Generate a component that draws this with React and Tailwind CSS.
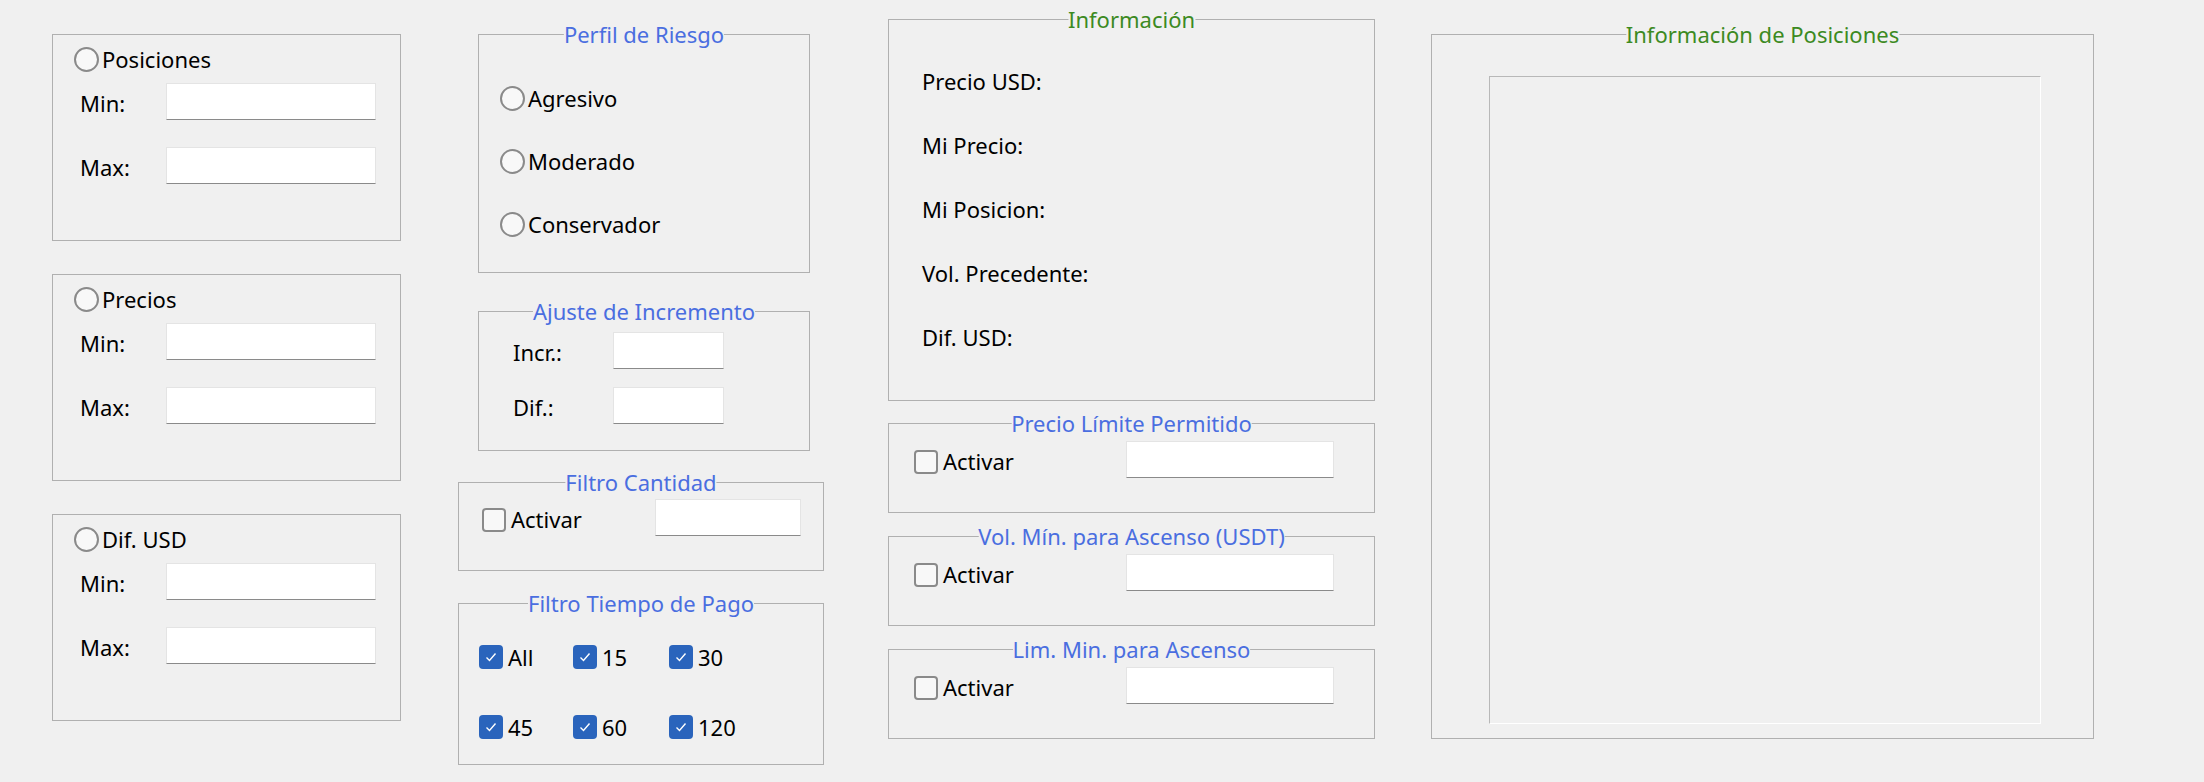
const F = { fontFamily: '"Noto Sans", "Open Sans", sans-serif' };

function Box({ title, green, className = "", children }) {
  return (
    <div className={`relative border border-[#b0b0b0] ${className}`}>
      {title && (
        <span className={`absolute left-1/2 -translate-x-1/2 -top-[16px] bg-[#f0f0f0] whitespace-nowrap text-[22px] leading-[30px] ${green ? "text-[#3c8a22]" : "text-[#4a6ee0]"}`}>
          {title}
        </span>
      )}
      {children}
    </div>
  );
}

function Radio({ label }) {
  return (
    <div className="flex items-center gap-[3px] h-[30px]">
      <span className="w-[25px] h-[25px] rounded-full border-2 border-[#8a8a8a] bg-[#f8f8f8]" />
      <span className="text-[22px]">{label}</span>
    </div>
  );
}

function Check({ label, checked }) {
  return (
    <div className="flex items-center gap-[5px] h-[30px]">
      {checked ? (
        <span className="w-[24px] h-[24px] rounded-[4px] bg-[#2a64bc] flex items-center justify-center">
          <svg width="14" height="14" viewBox="0 0 14 14"><path d="M2.5 7.5 L5.5 10.5 L11.5 3.5" fill="none" stroke="white" strokeWidth="1.4" /></svg>
        </span>
      ) : (
        <span className="w-[24px] h-[24px] rounded-[4px] border-2 border-[#8a8a8a] bg-[#f8f8f8]" />
      )}
      <span className="text-[22px]">{label}</span>
    </div>
  );
}

function Input({ w, className = "" }) {
  return <div className={`h-[37px] bg-white border border-[#e4e4e4] border-b-[#8a8a8a] ${w} ${className}`} />;
}

function RangeBox({ label }) {
  return (
    <Box className="h-[207px]">
      <div className="ml-[21px] mt-[9px]"><Radio label={label} /></div>
      <div className="flex items-center mt-[9px]">
        <span className="ml-[27px] w-[86px] text-[22px] mt-[4px]">Min:</span>
        <Input w="w-[210px]" />
      </div>
      <div className="flex items-center mt-[27px]">
        <span className="ml-[27px] w-[86px] text-[22px] mt-[4px]">Max:</span>
        <Input w="w-[210px]" />
      </div>
    </Box>
  );
}

function ActBox({ title }) {
  return (
    <Box title={title} className="h-[90px]">
      <div className="flex items-center mt-[17px]">
        <div className="ml-[25px] w-[212px] mt-[4px]"><Check label="Activar" /></div>
        <Input w="w-[208px]" />
      </div>
    </Box>
  );
}

export default function App() {
  return (
    <div style={F} className="w-[2204px] h-[782px] bg-[#f0f0f0] text-black flex overflow-hidden">
      <div className="ml-[52px] mt-[34px] w-[349px] flex flex-col gap-[33px]">
        <RangeBox label="Posiciones" />
        <RangeBox label="Precios" />
        <RangeBox label="Dif. USD" />
      </div>
      <div className="ml-[57px] mt-[34px] w-[366px] flex flex-col">
        <Box title="Perfil de Riesgo" className="ml-[20px] mr-[14px] h-[239px]">
          <div className="ml-[21px] mt-[48px] flex flex-col gap-[33px]">
            <Radio label="Agresivo" />
            <Radio label="Moderado" />
            <Radio label="Conservador" />
          </div>
        </Box>
        <Box title="Ajuste de Incremento" className="ml-[20px] mr-[14px] mt-[38px] h-[140px]">
          <div className="flex items-center mt-[20px]">
            <span className="ml-[34px] w-[100px] text-[22px] mt-[4px]">Incr.:</span>
            <Input w="w-[111px]" />
          </div>
          <div className="flex items-center mt-[18px]">
            <span className="ml-[34px] w-[100px] text-[22px] mt-[4px]">Dif.:</span>
            <Input w="w-[111px]" />
          </div>
        </Box>
        <Box title="Filtro Cantidad" className="mt-[31px] h-[89px]">
          <div className="flex items-center mt-[16px]">
            <div className="ml-[23px] w-[173px] mt-[4px]"><Check label="Activar" /></div>
            <Input w="w-[146px]" />
          </div>
        </Box>
        <Box title="Filtro Tiempo de Pago" className="mt-[32px] h-[162px]">
          <div className="grid grid-cols-[94px_96px_80px] ml-[20px] mt-[38px] gap-y-[40px]">
            {["All", "15", "30", "45", "60", "120"].map((l) => (
              <Check key={l} label={l} checked />
            ))}
          </div>
        </Box>
      </div>
      <div className="ml-[64px] mt-[19px] w-[487px] flex flex-col">
        <Box title="Información" green className="h-[382px]">
          <div className="ml-[33px] mt-[46px] flex flex-col gap-[34px] text-[22px] leading-[30px]">
            <span>Precio USD:</span>
            <span>Mi Precio:</span>
            <span>Mi Posicion:</span>
            <span>Vol. Precedente:</span>
            <span>Dif. USD:</span>
          </div>
        </Box>
        <div className="mt-[22px] flex flex-col gap-[23px]">
          <ActBox title="Precio Límite Permitido" />
          <ActBox title="Vol. Mín. para Ascenso (USDT)" />
          <ActBox title="Lim. Min. para Ascenso" />
        </div>
      </div>
      <div className="ml-[56px] mt-[34px] w-[663px] h-[705px]">
        <Box title="Información de Posiciones" green className="h-full pt-[41px] pl-[57px]">
          <div className="w-[552px] h-[648px] border border-[#b8b8b8] border-r-white border-b-white bg-[#f0f0f0]" />
        </Box>
      </div>
    </div>
  );
}
